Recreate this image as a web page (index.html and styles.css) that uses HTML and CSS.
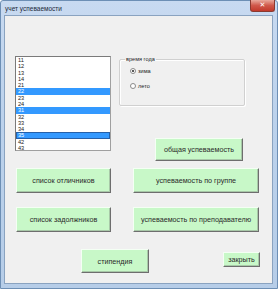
FILE: index.html
```html
<!DOCTYPE html>
<html lang="ru">
<head>
    <meta charset="UTF-8">
    <title>учет успеваемости</title>
    <link rel="stylesheet" href="styles.css">
</head>
<body>
    <div class="window">
        <div class="titlebar">
            <span class="title">учет успеваемости</span>
            <span class="close">&#x2715;</span>
        </div>
        <div class="client">
            <div class="top">
                <ul class="listbox">
                    <li>11</li>
                    <li>12</li>
                    <li>13</li>
                    <li>14</li>
                    <li>21</li>
                    <li class="sel">22</li>
                    <li>23</li>
                    <li>24</li>
                    <li class="sel">31</li>
                    <li>32</li>
                    <li>33</li>
                    <li>34</li>
                    <li class="sel focus">35</li>
                    <li>42</li>
                    <li>43</li>
                </ul>
                <div class="right-col">
                    <fieldset class="group">
                        <legend>время года</legend>
                        <label class="radio"><span class="dot on"></span>зима</label>
                        <label class="radio"><span class="dot"></span>лето</label>
                    </fieldset>
                    <button class="btn btn-total">общая успеваемость</button>
                </div>
            </div>

            <div class="row row-2">
                <button class="btn btn-left">список отличников</button>
                <button class="btn btn-wide">успеваемость по группе</button>
            </div>
            <div class="row row-3">
                <button class="btn btn-left">список задолжников</button>
                <button class="btn btn-wide">успеваемость по преподавателю</button>
            </div>
            <div class="row row-4">
                <button class="btn btn-grant">стипендия</button>
                <button class="btn btn-close">закрыть</button>
            </div>
        </div>
    </div>
</body>
</html>
```

FILE: styles.css
```css
body {
    margin: 0;
    font-family: "Liberation Sans", "DejaVu Sans", sans-serif;
    background: #fff;
}

.window {
    width: 278px;
    height: 289px;
    box-sizing: border-box;
    background: linear-gradient(180deg, #c8daf1 0%, #bcd2ec 40%, #b6cde8 100%);
    border: 1px solid #6d8fb5;
    border-radius: 3px 3px 0 0;
    padding: 0 4px 4px 3px;
    display: flex;
    flex-direction: column;
}

.titlebar {
    height: 14px;
    display: flex;
    align-items: flex-start;
    justify-content: space-between;
}

.title {
    font-size: 6.5px;
    color: #1c2a3a;
    margin: 4px 0 0 1px;
}

.close {
    width: 23px;
    height: 11px;
    margin: -1px -2px 0 0;
    background: linear-gradient(180deg, #e9a99c 0%, #d0584a 50%, #c23a2c 100%);
    border: 1px solid #8a3a30;
    border-top: none;
    border-radius: 0 0 3px 3px;
    color: #fff;
    font-size: 7px;
    font-weight: bold;
    line-height: 10px;
    text-align: center;
}

.client {
    flex: 1;
    background: #f0f0f0;
    border: 1px solid #8aa3c0;
    padding-top: 40px;
}

.top {
    display: flex;
    gap: 8px;
    padding-left: 10px;
}

.listbox {
    list-style: none;
    margin: 0;
    padding: 0;
    width: 96px;
    height: 95px;
    box-sizing: border-box;
    background: #fff;
    border: 1px solid #a0a0a0;
    border-top-color: #7a7a7a;
    border-left-color: #7a7a7a;
    font-size: 5.6px;
    color: #222;
}

.listbox li {
    height: 6.29px;
    line-height: 6.29px;
    padding-left: 2px;
    box-sizing: border-box;
}

.listbox li.sel {
    background: #3399ff;
    color: #fff;
}

.listbox li.focus {
    outline: 1px solid #2660a8;
    outline-offset: -1px;
}

.right-col {
    display: flex;
    flex-direction: column;
}

.group {
    width: 126px;
    height: 50px;
    box-sizing: border-box;
    margin: 0;
    padding: 6px 0 0 10px;
    border: 1px solid #d0d0d0;
    border-radius: 2px;
    box-shadow: inset 1px 1px 0 #fff, 1px 1px 0 #fff;
    display: flex;
    flex-direction: column;
    gap: 9px;
}

.group legend {
    font-size: 5.6px;
    color: #222;
    padding: 0 1px;
    margin-left: -5px;
    line-height: 6px;
}

.radio {
    display: flex;
    align-items: center;
    gap: 2px;
    font-size: 5.6px;
    color: #222;
    line-height: 6px;
}

.dot {
    width: 4px;
    height: 4px;
    border: 1px solid #8a8a8a;
    border-radius: 50%;
    background: #fff;
    position: relative;
}

.dot.on::after {
    content: '';
    position: absolute;
    left: 1px;
    top: 1px;
    width: 2px;
    height: 2px;
    border-radius: 50%;
    background: #222;
}

.btn {
    font-family: "Liberation Sans", "DejaVu Sans", sans-serif;
    font-size: 7.2px;
    color: #2a2a2a;
    background: #c8f8c8;
    border: 1px solid #f4fff4;
    border-right-color: #6e6e6e;
    border-bottom-color: #6e6e6e;
    box-shadow: inset -1px -1px 0 #a8c8a8;
    padding: 0;
    margin: 0;
    box-sizing: border-box;
}

.btn-total {
    width: 88px;
    height: 23px;
    margin: 32px 0 0 36px;
}

.row {
    display: flex;
    align-items: flex-start;
}

.row-2 {
    margin-top: 7px;
    padding-left: 11px;
    gap: 22px;
}

.row-3 {
    margin-top: 14px;
    padding-left: 11px;
    gap: 22px;
}

.row-4 {
    margin-top: 17px;
    padding-left: 76px;
    gap: 74px;
}

.btn-left {
    width: 95px;
    height: 25px;
}

.btn-wide {
    width: 126px;
    height: 25px;
}

.btn-grant {
    width: 68px;
    height: 24px;
}

.btn-close {
    width: 37px;
    height: 15px;
    margin-top: 3px;
}
```
